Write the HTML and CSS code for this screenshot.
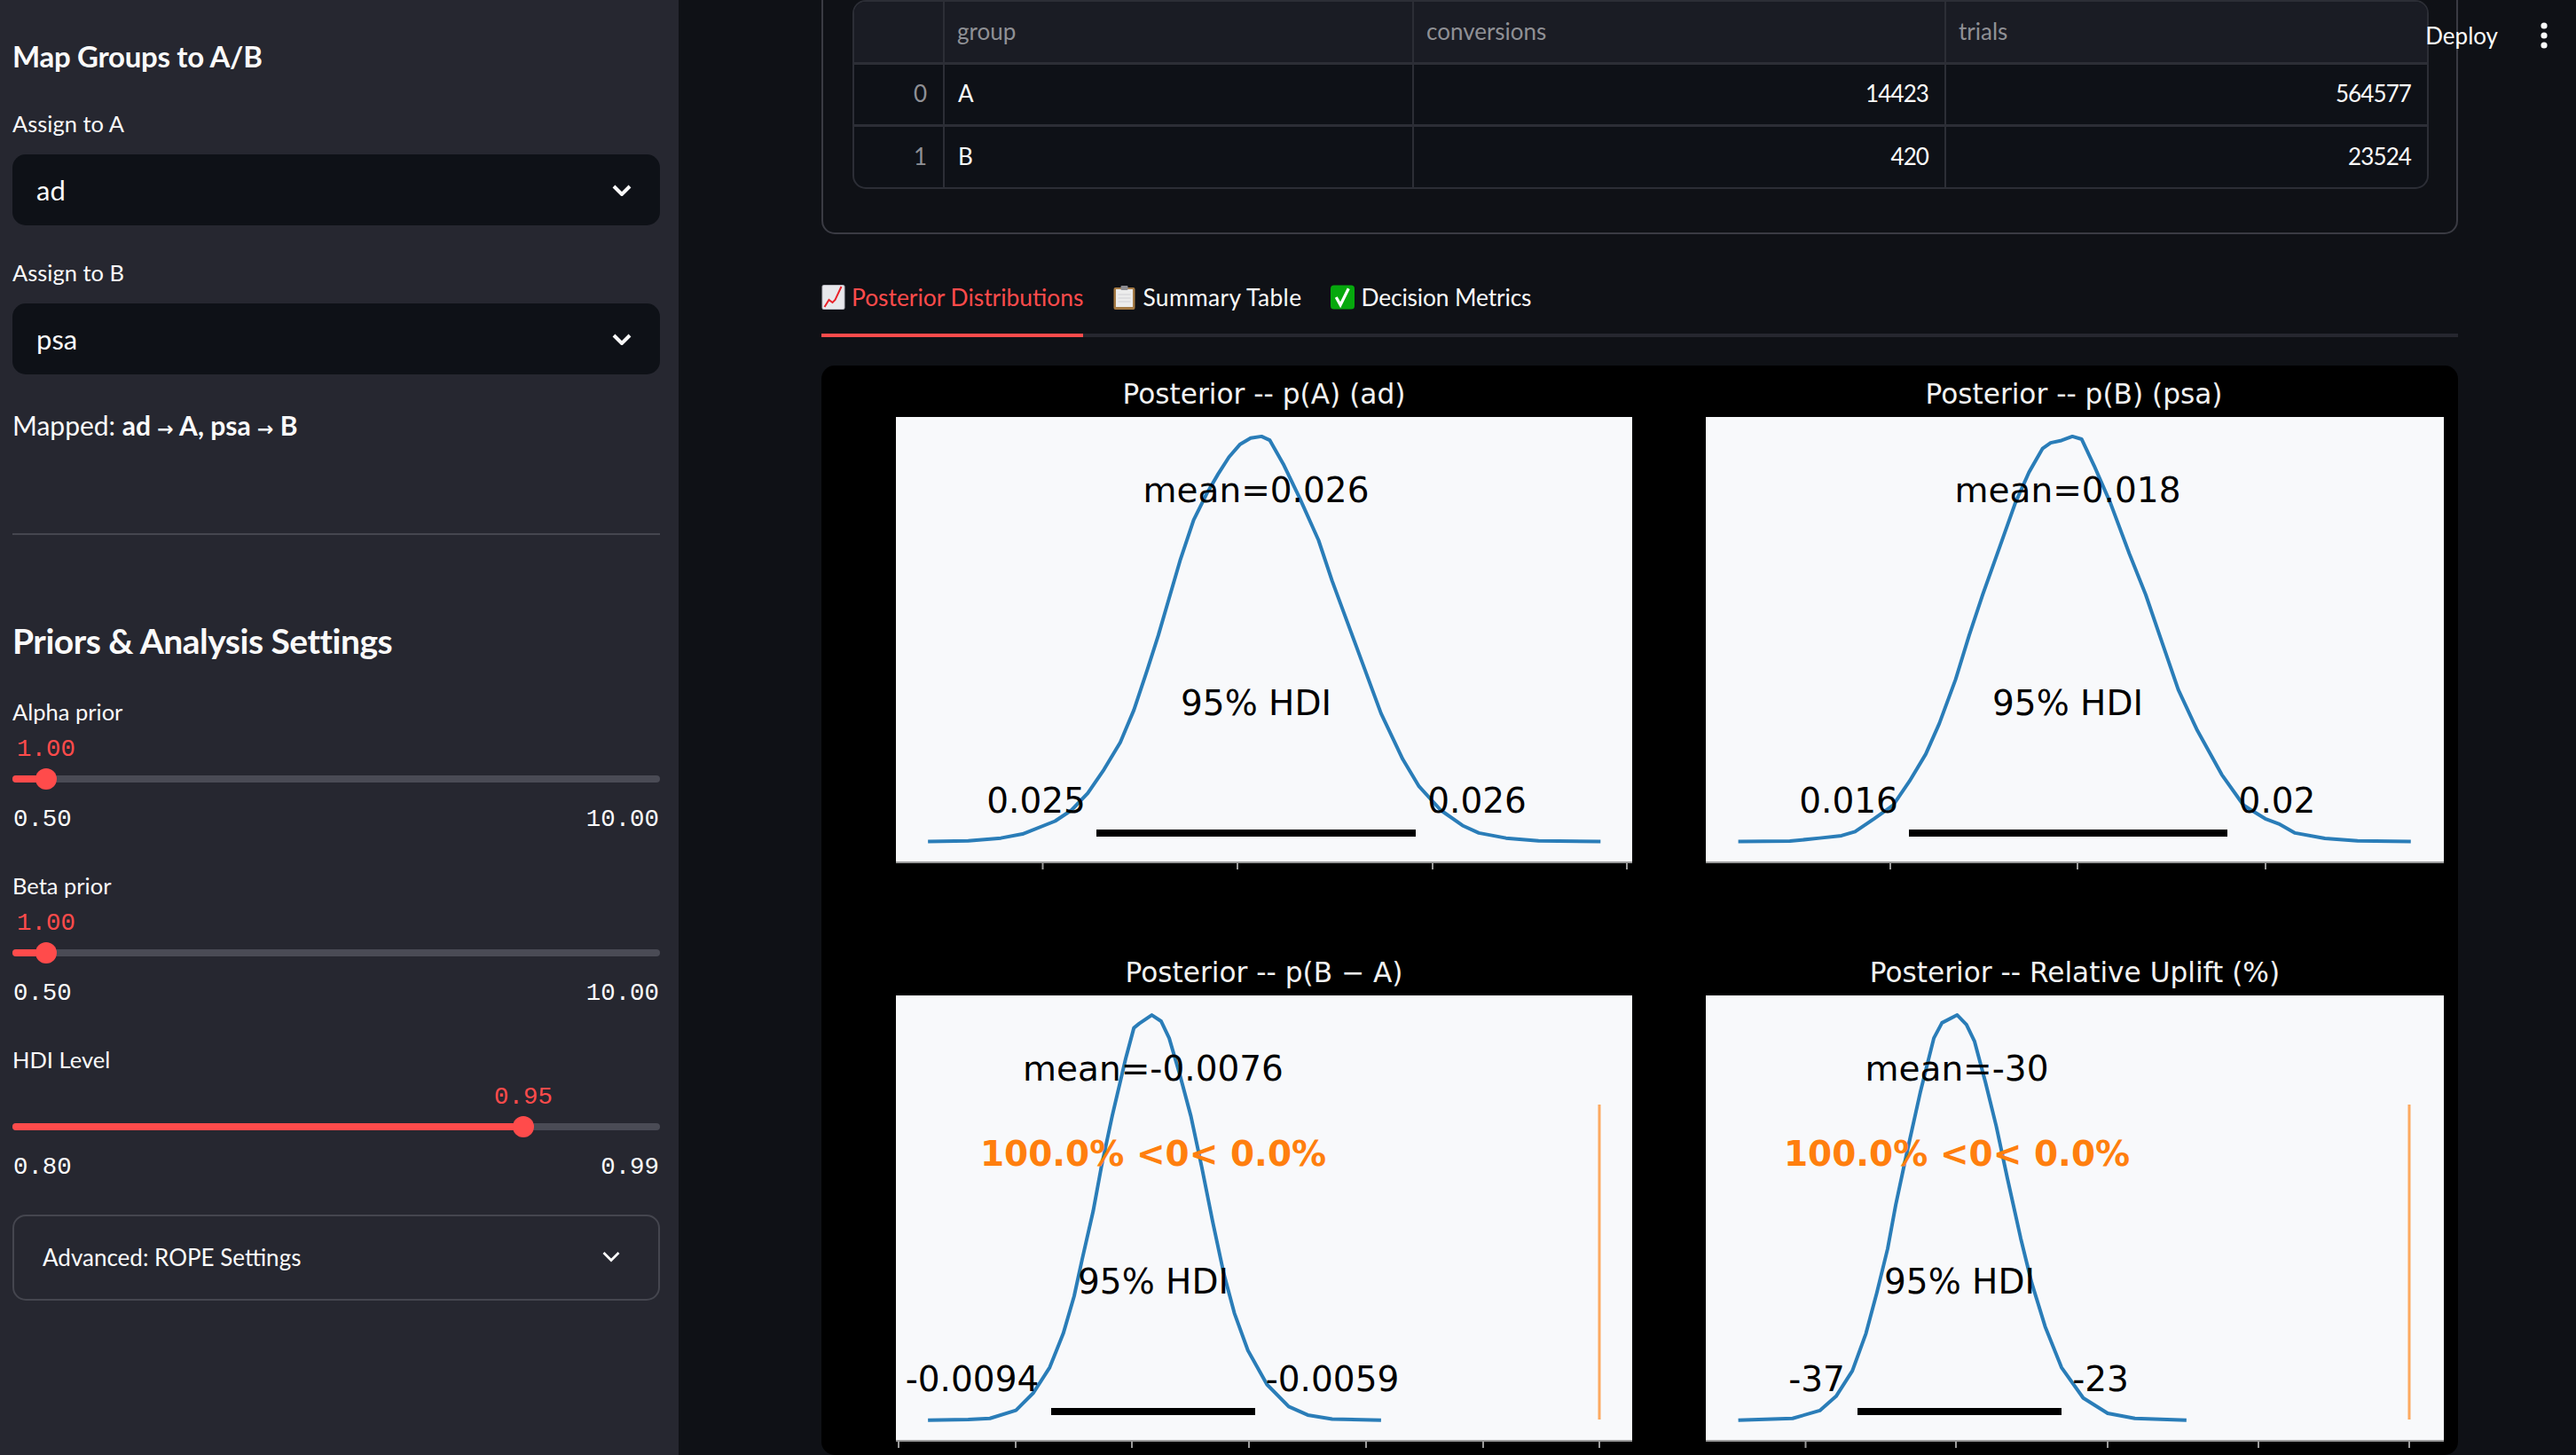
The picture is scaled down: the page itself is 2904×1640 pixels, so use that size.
FILE: index.html
```html
<!DOCTYPE html>
<html lang="en">
<head>
<meta charset="utf-8">
<title>A/B Analysis</title>
<link rel="stylesheet" href="styles.css">
</head>
<body>
<div class="app">
  <aside class="sidebar">
    <h2 class="side-h1">Map Groups to A/B</h2>
    <div class="label label-first">Assign to A</div>
    <div class="select"><span>ad</span>
      <svg class="chev" viewBox="0 0 22 13"><path d="M2 2l9 9 9-9"/></svg></div>
    <div class="label label-next">Assign to B</div>
    <div class="select"><span>psa</span>
      <svg class="chev" viewBox="0 0 22 13"><path d="M2 2l9 9 9-9"/></svg></div>
    <p class="mapped">Mapped: <strong>ad <span class="arr">→</span> A, psa <span class="arr">→</span> B</strong></p>
    <hr class="divider">
    <h2 class="side-h2">Priors &amp; Analysis Settings</h2>

    <div class="slider">
      <div class="label">Alpha prior</div>
      <div class="s-value"><span style="left:5.2%">1.00</span></div>
      <div class="s-track"><div class="s-rail"><div class="s-fill" style="width:5.2%"></div></div><div class="s-thumb" style="left:5.2%"></div></div>
      <div class="s-range"><span>0.50</span><span>10.00</span></div>
    </div>
    <div class="slider">
      <div class="label">Beta prior</div>
      <div class="s-value"><span style="left:5.2%">1.00</span></div>
      <div class="s-track"><div class="s-rail"><div class="s-fill" style="width:5.2%"></div></div><div class="s-thumb" style="left:5.2%"></div></div>
      <div class="s-range"><span>0.50</span><span>10.00</span></div>
    </div>
    <div class="slider">
      <div class="label">HDI Level</div>
      <div class="s-value"><span style="left:78.9%">0.95</span></div>
      <div class="s-track"><div class="s-rail"><div class="s-fill" style="width:78.9%"></div></div><div class="s-thumb" style="left:78.9%"></div></div>
      <div class="s-range"><span>0.80</span><span>0.99</span></div>
    </div>

    <div class="expander"><span>Advanced: ROPE Settings</span>
      <svg class="chev-thin" viewBox="0 0 20 13"><path d="M1.5 2l8.5 8.5L18.5 2"/></svg></div>
  </aside>

  <main class="main">
    <header class="topbar">
      <span class="deploy">Deploy</span>
      <svg class="dots" viewBox="0 0 8 30"><circle cx="4" cy="4" r="3.6"/><circle cx="4" cy="15" r="3.6"/><circle cx="4" cy="26" r="3.6"/></svg>
    </header>

    <div class="content">
      <section class="card">
        <table class="data">
          <colgroup><col class="c0"><col class="c1"><col class="c2"><col class="c3"></colgroup>
          <thead><tr><th></th><th>group</th><th>conversions</th><th>trials</th></tr></thead>
          <tbody>
            <tr><td class="idx">0</td><td>A</td><td class="num">14423</td><td class="num">564577</td></tr>
            <tr><td class="idx">1</td><td>B</td><td class="num">420</td><td class="num">23524</td></tr>
          </tbody>
        </table>
      </section>

      <nav class="tabs">
        <div class="tab active">
          <svg class="emoji" viewBox="0 0 26 28"><rect x=".5" y=".5" width="25" height="27" rx="1.5" fill="#e8e8ec" stroke="#b8b8c0"/><path d="M3 25l5-8 4 3 3-3L22 2" fill="none" stroke="#e8222a" stroke-width="2"/></svg>
          <span>Posterior Distributions</span>
        </div>
        <div class="tab tab-loose">
          <svg class="emoji" viewBox="0 0 26 28"><rect x="1" y="3" width="24" height="25" rx="2" fill="#a47a45"/><rect x="3.5" y="5" width="19" height="20" fill="#ececec"/><rect x="9" y="1" width="8" height="5" rx="1" fill="#8d8d92"/><path d="M6 11h14M6 15h14M6 19h14" stroke="#d0d0d4" stroke-width="1"/></svg>
          <span>Summary Table</span>
        </div>
        <div class="tab tab-tight">
          <svg class="emoji" viewBox="0 0 28 28"><rect width="28" height="28" rx="4" fill="#06a80d"/><path d="M6.5 14l5 9L21 4" fill="none" stroke="#fff" stroke-width="3.4"/></svg>
          <span>Decision Metrics</span>
        </div>
      </nav>

      <figure class="figure">
        <svg class="plots" viewBox="926 412 1845 1228" width="1845" height="1228">
          <!-- p(A) -->
          <rect class="ax" x="1010" y="470" width="830" height="502"/>
          <path class="spine" d="M1010 972H1840M1175.500 972v8M1395 972v8M1615 972v8M1834 972v8"/>
          <text class="title" x="1425" y="455">Posterior -- p(A) (ad)</text>
          <g transform="translate(920 410) scale(.6124 .3827)">
            <polyline class="kde" points="206,1407 280,1405 340,1397 380,1385 440,1347 470,1315 500,1265 530,1195 560,1115 585,1020 610,900 630,800 650,690 670,580 695,460 720,380 740,325 760,275 780,238 800,219 820,214 835,225 860,295 890,395 925,520 950,640 980,770 1010,900 1040,1030 1080,1165 1110,1245 1150,1315 1190,1360 1220,1382 1270,1397 1330,1405 1444,1407"/>
          </g>
          <rect x="1236" y="935" width="360" height="8"/>
          <text class="note" x="1416" y="565">mean=0.026</text>
          <text class="note" x="1416" y="805">95% HDI</text>
          <text class="note" x="1168" y="915">0.025</text>
          <text class="note" x="1665" y="915">0.026</text>

          <!-- p(B) -->
          <rect class="ax" x="1923" y="470" width="832" height="502"/>
          <path class="spine" d="M1923 972H2755M2131 972v8M2342 972v8M2554 972v8"/>
          <text class="title" x="2338" y="455">Posterior -- p(B) (psa)</text>
          <g transform="translate(1880 410) scale(.6124 .3827)">
            <polyline class="kde" points="130,1407 225,1406 280,1397 320,1390 345,1378 380,1340 415,1300 445,1230 475,1150 500,1060 530,930 555,800 580,680 610,545 640,410 665,320 690,250 705,233 725,226 745,214 762,222 785,300 815,410 850,560 880,680 910,820 940,960 975,1080 1020,1210 1060,1300 1100,1340 1125,1355 1155,1382 1210,1398 1270,1405 1368,1407"/>
          </g>
          <rect x="2152" y="935" width="359" height="8"/>
          <text class="note" x="2331" y="565">mean=0.018</text>
          <text class="note" x="2331" y="805">95% HDI</text>
          <text class="note" x="2084" y="915">0.016</text>
          <text class="note" x="2567" y="915">0.02</text>

          <!-- p(B - A) -->
          <rect class="ax" x="1010" y="1122" width="830" height="502"/>
          <path class="spine" d="M1010 1624H1840M1013 1624v8M1145 1624v8M1276 1624v8M1408 1624v8M1540 1624v8M1672 1624v8M1803 1624v8"/>
          <text class="title" x="1425" y="1107">Posterior -- p(B − A)</text>
          <g transform="translate(920 1040) scale(.6124 .3827)">
            <polyline class="kde" points="206,1465 280,1463 320,1460 368,1436 400,1385 430,1310 455,1210 475,1100 490,990 510,850 525,720 545,570 570,400 585,310 595,297 618,272 635,290 650,340 670,450 690,570 710,720 730,880 750,1030 770,1150 795,1260 830,1360 870,1425 905,1450 950,1462 1040,1465"/>
          </g>
          <rect x="1185" y="1587" width="230" height="8"/>
          <line class="rope" x1="1803" y1="1245" x2="1803" y2="1600"/>
          <text class="note" x="1300" y="1217">mean=-0.0076</text>
          <text class="prob" x="1300" y="1313">100.0% &lt;0&lt; 0.0%</text>
          <text class="note" x="1300" y="1457">95% HDI</text>
          <text class="note" x="1096" y="1567">-0.0094</text>
          <text class="note" x="1502" y="1567">-0.0059</text>

          <!-- uplift -->
          <rect class="ax" x="1923" y="1122" width="832" height="502"/>
          <path class="spine" d="M1923 1624H2755M2035.500 1624v8M2205 1624v8M2376 1624v8M2546 1624v8M2716 1624v8"/>
          <text class="title" x="2339" y="1107">Posterior -- Relative Uplift (%)</text>
          <g transform="translate(1880 1040) scale(.6124 .3827)">
            <polyline class="kde" points="130,1465 230,1460 280,1437 310,1395 340,1320 365,1210 385,1090 405,960 420,830 440,680 465,500 490,340 505,295 533,272 550,300 565,350 585,470 605,600 625,750 650,930 670,1060 695,1190 725,1310 765,1400 810,1445 860,1460 955,1465"/>
          </g>
          <rect x="2094" y="1587" width="230" height="8"/>
          <line class="rope" x1="2716" y1="1245" x2="2716" y2="1600"/>
          <text class="note" x="2206" y="1217">mean=-30</text>
          <text class="prob" x="2206" y="1313">100.0% &lt;0&lt; 0.0%</text>
          <text class="note" x="2209" y="1457">95% HDI</text>
          <text class="note" x="2048" y="1567">-37</text>
          <text class="note" x="2368" y="1567">-23</text>
        </svg>
      </figure>
    </div>
  </main>
</div>
</body>
</html>
```

FILE: styles.css
```css
* { box-sizing: border-box; }
html, body { margin: 0; height: 100%; }
body {
  background: #0f1116;
  color: #fafafa;
  font-family: "Lato", "Noto Sans", sans-serif;
  overflow: hidden;
}
.app { display: flex; height: 1640px; overflow: hidden; }

/* Sidebar */
.sidebar {
  flex: 0 0 765px;
  background: #262730;
  padding: 43px 21px 0 14px;
}
.side-h1 { margin: 0; font-size: 33px; line-height: 40px; font-weight: 700; letter-spacing: -.3px; }
.side-h2 { margin: 94px 0 0; font-size: 39px; line-height: 50px; font-weight: 700; letter-spacing: -.5px; }
.label { height: 32px; font-size: 25.5px; line-height: 30px; color: #fafafa; }
.label-first { margin-top: 41px; }
.label-next { margin-top: 38px; }
.select {
  display: flex; align-items: center; justify-content: space-between;
  height: 80px; margin-top: 18px; padding: 0 32px 0 27px;
  background: #0e1117; border-radius: 15px;
  font-size: 31px;
}
.chev { width: 22px; height: 13px; }
.chev path { fill: none; stroke: #fafafa; stroke-width: 4; }
.mapped { height: 36px; margin: 39px 0 0; font-size: 30px; line-height: 36px; }
.mapped strong { font-weight: 700; }
.arr { font: 700 22px/1 "DejaVu Sans", sans-serif; }
.divider { height: 2px; margin: 104px 0 0; border: 0; background: #45464f; }

.slider { margin-top: 40px; }
.slider + .slider { margin-top: 44px; }
.s-value { position: relative; height: 30px; margin-top: 11px; color: #ff4b4b; font: 27.4px/30px "Liberation Mono", monospace; }
.s-value span { position: absolute; top: 0; transform: translateX(-50%); }
.s-track { position: relative; height: 24px; margin-top: 6px; display: flex; align-items: center; }
.s-rail { flex: 1; height: 8px; border-radius: 4px; background: #4a4b55; overflow: hidden; }
.s-fill { height: 100%; background: #ff4b4b; }
.s-thumb { position: absolute; top: 0; width: 24px; height: 24px; margin-left: -12px; border-radius: 50%; background: #ff4b4b; }
.s-range { display: flex; justify-content: space-between; margin-top: 19px; padding: 0 1px; font: 27.4px/30px "Liberation Mono", monospace; color: #fafafa; }

.expander {
  display: flex; align-items: center; justify-content: space-between;
  height: 97px; margin-top: 38px; padding: 0 43px 2px 32px;
  border: 2px solid #45464f; border-radius: 15px;
  font-size: 26px;
}
.chev-thin { width: 20px; height: 13px; }
.chev-thin path { fill: none; stroke: #fafafa; stroke-width: 2.8; }

/* Main column */
.main { position: relative; flex: 1; min-width: 0; padding: 0 133px 0 161px; }
.topbar { position: absolute; top: 0; right: 0; display: flex; align-items: center; height: 80px; padding-right: 32px; z-index: 2; }
.deploy { font-size: 26px; margin-right: 48px; }
.dots { width: 8px; height: 30px; fill: #fafafa; }
.content { margin-top: -40px; }

.card {
  height: 304px; padding: 40px 33px 0 33px;
  border: 2px solid #3a3b43; border-radius: 15px;
}
.data {
  width: 1775px; table-layout: fixed; border-collapse: separate; border-spacing: 0;
  margin-top: -2px;
  font-size: 26px;
  border: 2px solid #2c2e36; border-radius: 15px;
  overflow: hidden;
  background: #0e1117;
}
.c0 { width: 102px; } .c1 { width: 529px; } .c2 { width: 600px; } .c3 { width: 542px; }
.data th, .data td { height: 70px; padding: 0 18px 3px 15px; border-right: 2px solid #2c2e36; border-bottom: 3px solid #2c2e36; }
.data th { height: 71px; }
.data th:last-child, .data td:last-child { border-right: 0; }
.data tbody tr:last-child td { height: 68px; border-bottom: 0; }
.data th { background: #1a1c24; color: #8f9095; font-weight: 400; text-align: left; padding-left: 14px; }
.data .idx { color: #8f9095; text-align: right; }
.data .num { text-align: right; letter-spacing: -.9px; }

.tabs { display: flex; gap: 33px; margin-top: 53px; border-bottom: 4px solid #26272f; }
.tab { display: flex; align-items: center; gap: 7px; height: 59px; padding-bottom: 23px; margin-bottom: -4px; font-size: 26.4px; }
.tab.active { color: #ff4b4b; border-bottom: 4px solid #ff4b4b; height: 63px; }
.tab-loose span { letter-spacing: .35px; }
.tab-tight span { letter-spacing: -.15px; }
.emoji { width: 27px; height: 28px; flex: none; }

.figure { margin: 32px 0 0; height: 1228px; background: #000; border-radius: 15px; overflow: hidden; }
.plots { display: block; font-family: "DejaVu Sans", sans-serif; }
.ax { fill: #f8f9fb; }
.spine { fill: none; stroke: #9a9a9a; stroke-width: 2; }
.kde { fill: none; stroke: #2a7db8; stroke-width: 4; stroke-linejoin: round; vector-effect: non-scaling-stroke; }
.rope { stroke: #ff7f0e; stroke-opacity: .65; stroke-width: 3; }
.title { fill: #f2f2f2; font-size: 31.2px; text-anchor: middle; }
.note { fill: #000; font-size: 39px; text-anchor: middle; transform: translateY(1px); }
.prob { fill: #ff7f0e; font-size: 39px; font-weight: 700; text-anchor: middle; transform: translateY(1px); }
```
